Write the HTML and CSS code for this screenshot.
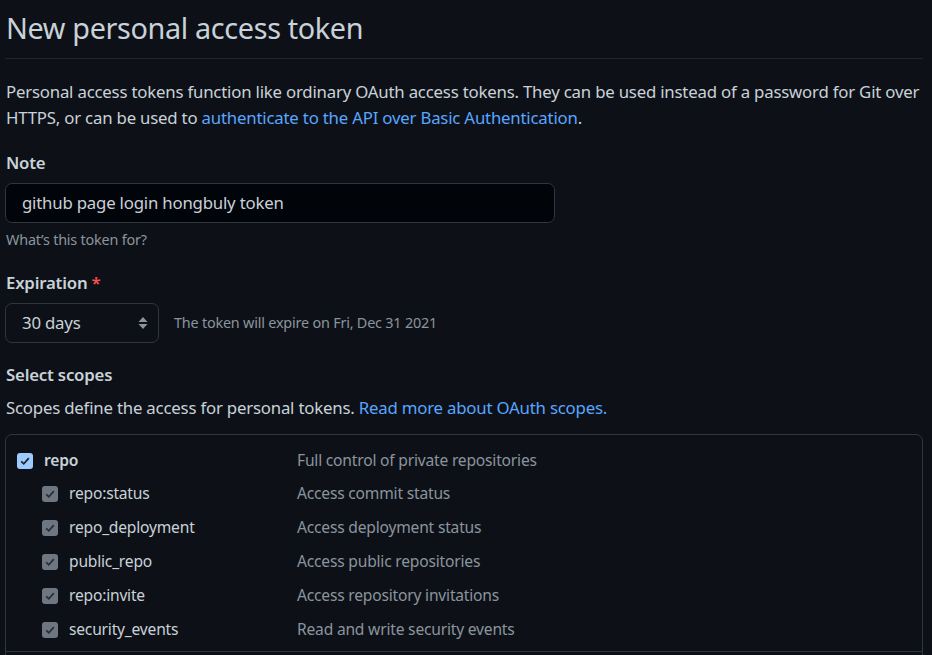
FILE: index.html
```html
<!DOCTYPE html>
<html>
<head>
<meta charset="utf-8">
<link rel="stylesheet" href="styles.css">
</head>
<body>
<div class="page">
  <h1 class="title">New personal access token</h1>
  <p class="intro">Personal access tokens function like ordinary OAuth access tokens. They can be used instead of a password for Git over HTTPS, or can be used to <a href="#">authenticate to the API over Basic Authentication</a>.</p>

  <div class="field">
    <label class="label">Note</label>
    <div class="input">github page login hongbuly token</div>
    <div class="note">What’s this token for?</div>
  </div>

  <div class="field">
    <label class="label">Expiration <span class="req">*</span></label>
    <div class="exp-row">
      <div class="select">30 days
        <svg class="updown" width="10" height="14" viewBox="0 0 10 14"><path d="M5 1 L9.5 6 H0.5 Z M5 13 L0.5 8 H9.5 Z" fill="#8b949e"/></svg>
      </div>
      <span class="exp-note">The token will expire on Fri, Dec 31 2021</span>
    </div>
  </div>

  <div class="field">
    <label class="label">Select scopes</label>
    <p class="scope-desc">Scopes define the access for personal tokens. <a href="#">Read more about OAuth scopes.</a></p>
    <div class="scopes">
      <div class="scope-group">
        <div class="row parent">
          <span class="cell-name"><span class="cb cb-on"><svg width="12" height="12" viewBox="0 0 12 12"><path d="M2.2 6.3 L4.8 8.8 L9.8 3.2" stroke="#1d2633" stroke-width="1.8" fill="none"/></svg></span><b>repo</b></span>
          <span class="cell-desc">Full control of private repositories</span>
        </div>
        <div class="row child">
          <span class="cell-name"><span class="cb cb-dis"><svg width="12" height="12" viewBox="0 0 12 12"><path d="M2.2 6.3 L4.8 8.8 L9.8 3.2" stroke="#2a2f36" stroke-width="1.8" fill="none"/></svg></span>repo:status</span>
          <span class="cell-desc">Access commit status</span>
        </div>
        <div class="row child">
          <span class="cell-name"><span class="cb cb-dis"><svg width="12" height="12" viewBox="0 0 12 12"><path d="M2.2 6.3 L4.8 8.8 L9.8 3.2" stroke="#2a2f36" stroke-width="1.8" fill="none"/></svg></span>repo_deployment</span>
          <span class="cell-desc">Access deployment status</span>
        </div>
        <div class="row child">
          <span class="cell-name"><span class="cb cb-dis"><svg width="12" height="12" viewBox="0 0 12 12"><path d="M2.2 6.3 L4.8 8.8 L9.8 3.2" stroke="#2a2f36" stroke-width="1.8" fill="none"/></svg></span>public_repo</span>
          <span class="cell-desc">Access public repositories</span>
        </div>
        <div class="row child">
          <span class="cell-name"><span class="cb cb-dis"><svg width="12" height="12" viewBox="0 0 12 12"><path d="M2.2 6.3 L4.8 8.8 L9.8 3.2" stroke="#2a2f36" stroke-width="1.8" fill="none"/></svg></span>repo:invite</span>
          <span class="cell-desc">Access repository invitations</span>
        </div>
        <div class="row child">
          <span class="cell-name"><span class="cb cb-dis"><svg width="12" height="12" viewBox="0 0 12 12"><path d="M2.2 6.3 L4.8 8.8 L9.8 3.2" stroke="#2a2f36" stroke-width="1.8" fill="none"/></svg></span>security_events</span>
          <span class="cell-desc">Read and write security events</span>
        </div>
      </div>
    </div>
  </div>
</div>
</body>
</html>
```

FILE: styles.css
```css
* { box-sizing: border-box; }
html, body {
  margin: 0;
  padding: 0;
  background: #0d1117;
  color: #c9d1d9;
  font-family: "Noto Sans", "Liberation Sans", sans-serif;
  font-size: 16.8px;
  line-height: 1.5;
  letter-spacing: -0.2px;
  overflow: hidden;
}
a { color: #58a6ff; text-decoration: none; }
.page {
  width: 923px;
  padding-left: 5px;
}
.title {
  margin: 0;
  padding: 6px 0 9px 1px;
  font-size: 28.8px;
  font-weight: 400;
  line-height: 1.5;
  letter-spacing: -0.35px;
  border-bottom: 1px solid #21262d;
}
.intro {
  margin: 20px -9px 0 1px;
  line-height: 26px;
}
.field { margin-top: 20px; }
.label {
  display: block;
  font-weight: 600;
  padding-left: 1px;
  line-height: 24px;
}
.req { color: #f85149; }
.input {
  margin-top: 8px;
  width: 550px;
  height: 40px;
  background: #010409;
  border: 1px solid #30363d;
  border-radius: 7px;
  padding: 0 16px;
  line-height: 38px;
}
.note {
  margin-top: 6px;
  font-size: 14.4px;
  color: #8b949e;
  padding-left: 1px;
}
.exp-row {
  margin-top: 8px;
  display: flex;
  align-items: center;
  gap: 15px;
}
.select {
  width: 154px;
  height: 40px;
  border: 1px solid #30363d;
  border-radius: 7px;
  padding: 0 16px;
  line-height: 38px;
  display: flex;
  justify-content: space-between;
  align-items: center;
}
.updown { margin-right: -6px; }
.exp-note {
  font-size: 14.4px;
  color: #8b949e;
}
.scope-desc {
  margin: 8px 0 0 1px;
}
.scopes {
  margin-top: 14px;
  border: 1px solid #30363d;
  border-radius: 7px;
  font-size: 15.6px;
  padding-bottom: 30px;
}
.scope-group {
  padding: 10px 0 4px;
  border-bottom: 1px solid #30363d;
}
.row {
  display: flex;
  align-items: center;
  height: 34px;
}
.parent { height: 32px; }
.cell-name {
  width: 291px;
  display: flex;
  align-items: center;
  padding-left: 11px;
}
.child .cell-name { padding-left: 36px; }
.cell-desc { color: #8b949e; }
.cb {
  width: 16px;
  height: 16px;
  border-radius: 3px;
  margin-right: 11px;
  display: inline-flex;
  align-items: center;
  justify-content: center;
}
.cb-on { background: #9ecbff; }
.cb-dis { background: #6e7681; }
b { font-weight: 600; }
```
